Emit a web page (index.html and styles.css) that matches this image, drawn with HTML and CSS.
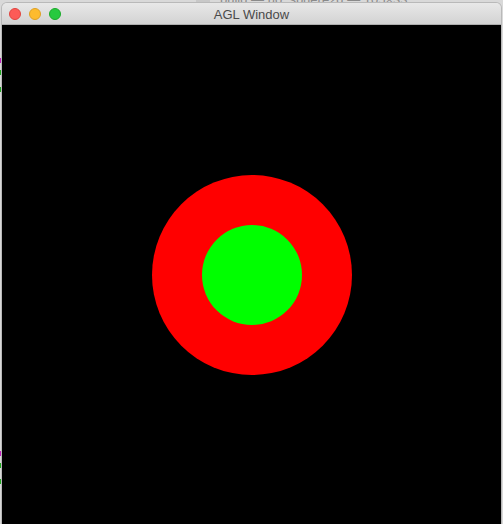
FILE: index.html
```html
<!DOCTYPE html>
<html>
<head>
<meta charset="utf-8">
<link rel="stylesheet" href="styles.css">
</head>
<body>
<div class="desktop">
  <div class="terminal-title"><span class="folder"></span>build — uo_sphere2d — 105×33</div>
  <span class="mark m1 magenta"></span>
  <span class="mark m2 green"></span>
  <span class="mark m3 green"></span>
  <span class="mark m4 magenta"></span>
  <span class="mark m5 green"></span>
  <span class="mark m6 green"></span>
  <div class="window">
    <div class="titlebar">
      <div class="lights">
        <span class="light red"></span>
        <span class="light yellow"></span>
        <span class="light green-l"></span>
      </div>
      <div class="title">AGL Window</div>
    </div>
    <div class="canvas">
      <div class="outer">
        <div class="inner"></div>
      </div>
    </div>
  </div>
</div>
</body>
</html>
```
FILE: styles.css
```css
html, body {
  margin: 0;
  padding: 0;
  width: 503px;
  height: 524px;
  overflow: hidden;
  background: #e4e4e4;
  font-family: "Helvetica Neue", "Liberation Sans", Arial, sans-serif;
}
.desktop {
  position: relative;
  width: 503px;
  height: 524px;
  background: #d9d9d9;
}
.terminal-title {
  position: absolute;
  top: -7px;
  left: 196px;
  font-size: 13px;
  line-height: 13px;
  color: #8a8a8a;
  white-space: nowrap;
  display: flex;
  align-items: center;
  gap: 10px;
}
.folder {
  display: inline-block;
  width: 14px;
  height: 12px;
  background: #c8c8c8;
  border-radius: 1px;
}
.mark {
  position: absolute;
  left: 0;
  width: 2px;
}
.magenta { background: #c21fc0; }
.green { background: #1fa81f; }
.m1 { top: 58px; height: 5px; }
.m2 { top: 70px; height: 5px; }
.m3 { top: 87px; height: 5px; }
.m4 { top: 451px; height: 5px; }
.m5 { top: 463px; height: 5px; }
.m6 { top: 479px; height: 5px; }
.window {
  position: absolute;
  left: 2px;
  top: 3px;
  width: 499px;
  height: 530px;
  display: flex;
  flex-direction: column;
  border-radius: 5px 5px 0 0;
  overflow: hidden;
  box-shadow: 0 0 0 1px #b9b9b9;
}
.titlebar {
  position: relative;
  height: 21px;
  flex: none;
  background: linear-gradient(#e8e8e8, #d3d3d3);
  border-bottom: 1px solid #aeaeae;
  display: flex;
  align-items: center;
}
.lights {
  display: flex;
  gap: 8px;
  padding-left: 7px;
}
.light {
  width: 12px;
  height: 12px;
  border-radius: 50%;
  box-sizing: border-box;
}
.red { background: #fc5b57; border: 1px solid #e0443e; }
.yellow { background: #fdbb2e; border: 1px solid #dea123; }
.green-l { background: #27c93f; border: 1px solid #1aab29; }
.title {
  position: absolute;
  left: 0;
  right: 0;
  top: 1px;
  height: 21px;
  line-height: 21px;
  text-align: center;
  font-size: 13px;
  color: #4a4a4a;
}
.canvas {
  background: #000;
  height: 500px;
  flex: none;
  display: flex;
  align-items: center;
  justify-content: center;
}
.outer {
  width: 200px;
  height: 200px;
  border-radius: 50%;
  background: #ff0000;
  display: flex;
  align-items: center;
  justify-content: center;
}
.inner {
  width: 100px;
  height: 100px;
  border-radius: 50%;
  background: #00ff00;
}
```
